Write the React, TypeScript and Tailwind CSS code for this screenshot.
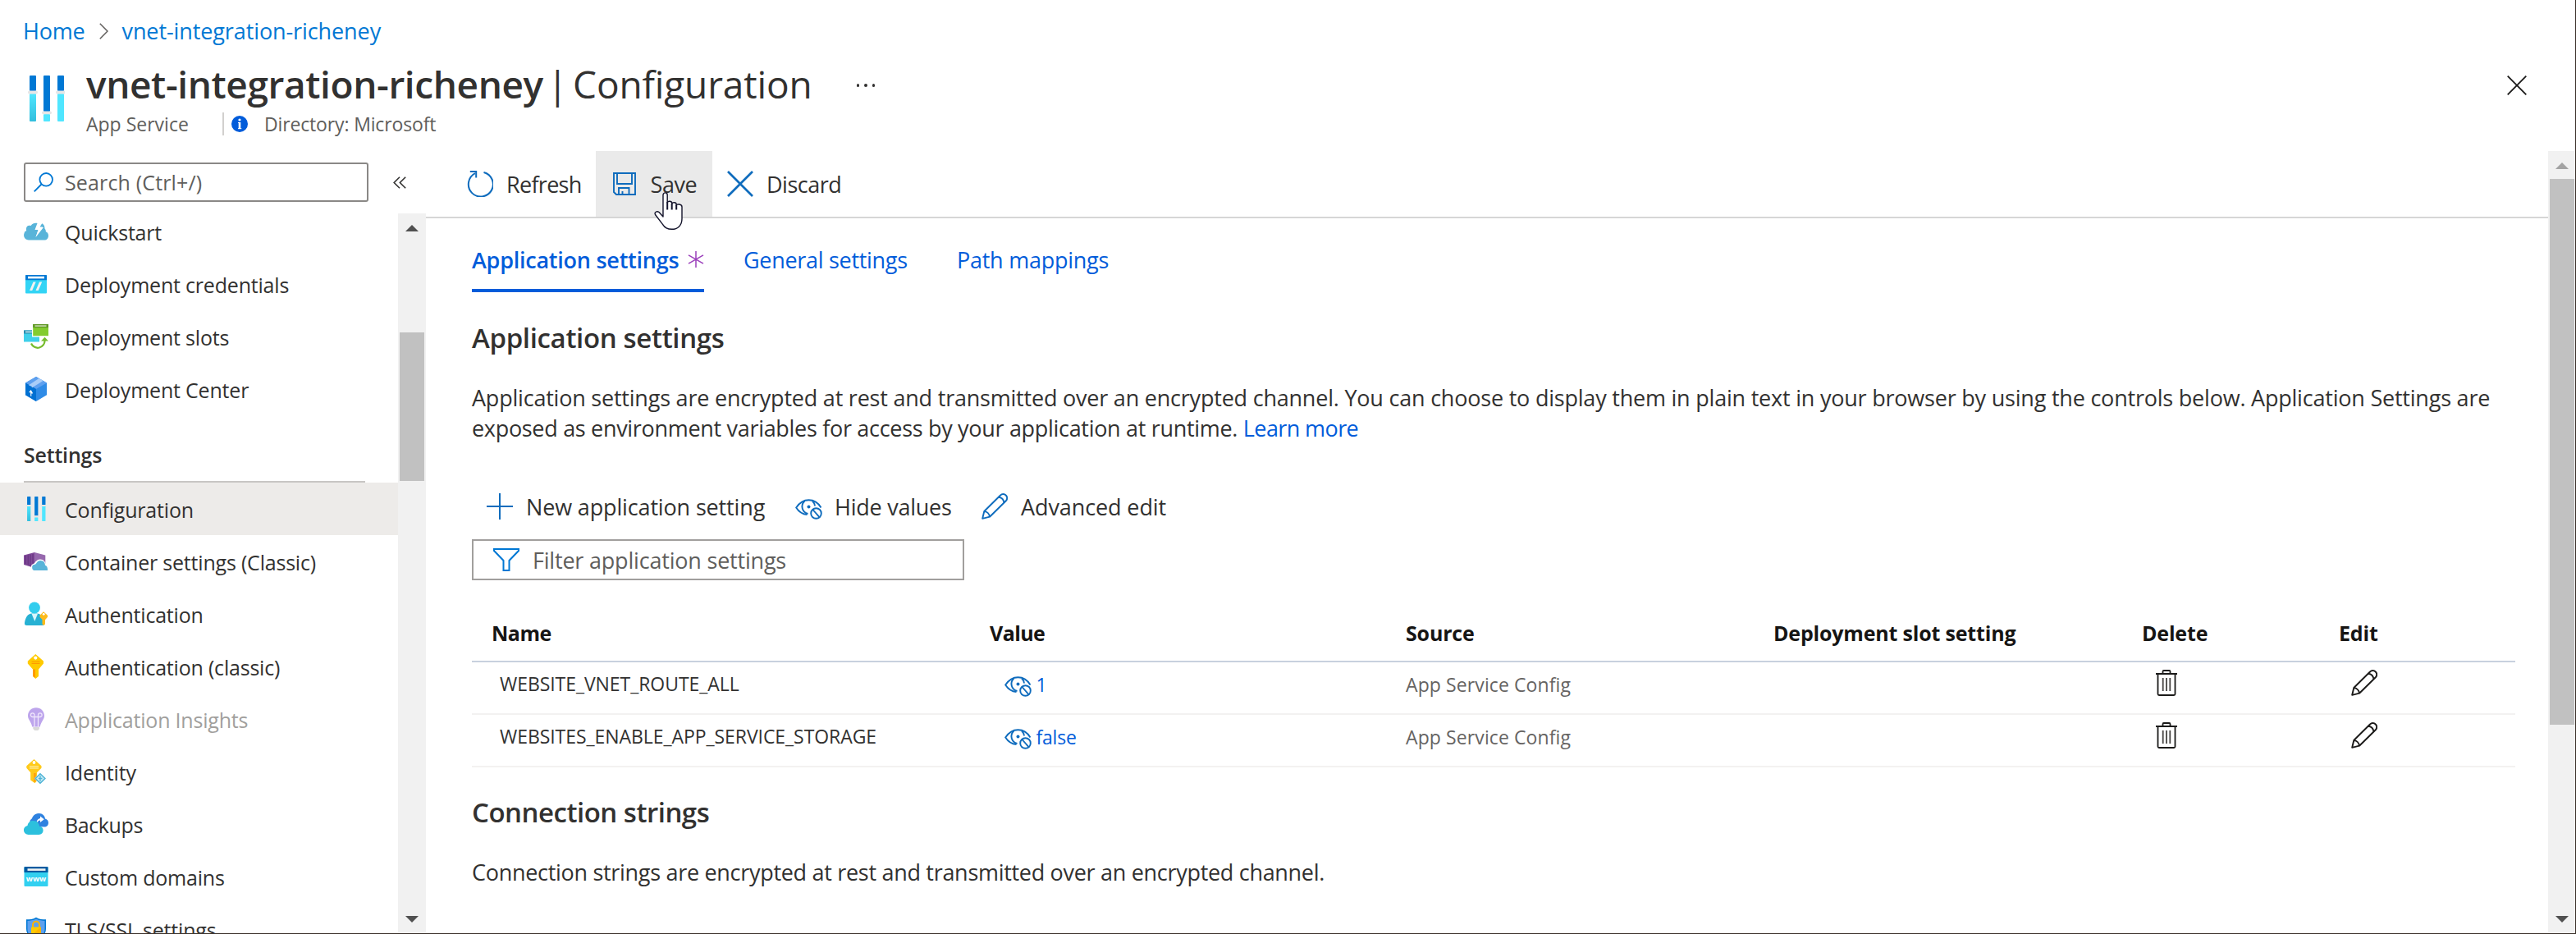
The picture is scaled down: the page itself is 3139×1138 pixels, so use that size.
import React from "react";

type IconProps = { className?: string };

function SlidersIcon({ className }: IconProps) {
  return (
    <svg className={className} viewBox="0 0 45 56" fill="none">
      <defs>
        <linearGradient id="sl" x1="0" y1="0" x2="0" y2="1">
          <stop offset="0" stopColor="#50e6ff" />
          <stop offset="1" stopColor="#32bedd" />
        </linearGradient>
      </defs>
      <rect x="2" y="0" width="8" height="19" rx="1" fill="#0078d4" />
      <rect x="2" y="22" width="8" height="34" rx="1" fill="url(#sl)" />
      <rect x="0" y="18.6" width="12" height="3.8" rx="1.9" fill="#e6e6e6" />
      <rect x="19" y="0" width="8" height="44" rx="1" fill="#0078d4" />
      <rect x="19" y="47" width="8" height="9" rx="1" fill="#50e6ff" />
      <rect x="17" y="43.4" width="12" height="3.8" rx="1.9" fill="#e6e6e6" />
      <rect x="36" y="0" width="8" height="19" rx="1" fill="#0078d4" />
      <rect x="36" y="22" width="8" height="34" rx="1" fill="#50e6ff" />
      <rect x="34" y="18.6" width="12" height="3.8" rx="1.9" fill="#e6e6e6" />
    </svg>
  );
}

const box = "w-[30px] h-[30px] shrink-0";

const QuickstartIcon = () => (
  <svg className={box} viewBox="0 0 30 30">
    <path d="M6 25.5A6 6 0 0 1 .6 17C1 15 2 14.600 3.200 14.300 2 9 5 7 8.600 8 10.500 5 14 4.200 16.500 5l-3 8h4l-3 9 8.500-12.500h-4.500L22.500 5.200c2 1.500 3 3.200 3 6.300 1 1 1.500 2.200 1.300 3.700 2 .5 3.200 2.500 3.200 5 0 3-2 5.300-5 5.300Z" fill="#59b4d9" />
    <path d="M17.500 4.500 14 12.700h4L14.500 22 24 10h-4.500l2.500-5.500Z" fill="#fff" />
  </svg>
);

const CredentialsIcon = () => (
  <svg className={box} viewBox="0 0 30 30">
    <rect x="2" y="4" width="26" height="22.500" rx="1" fill="#32d4f5" />
    <path d="M2 5a1 1 0 0 1 1-1h24a1 1 0 0 1 1 1v5.200H2Z" fill="#0078d4" />
    <rect x="5" y="5.800" width="20" height="2.600" fill="#fff" />
    <path d="M11.500 12.500h3.200L10.200 23H7Z M19 12.500h3.200L17.700 23h-3.200Z" fill="#f2f2f2" />
  </svg>
);

const SlotsIcon = () => (
  <svg className={box} viewBox="0 0 30 30">
    <rect x="0" y="7.500" width="19" height="14" fill="#3fd0ea" />
    <rect x="0" y="7.500" width="19" height="4" fill="#2a8cad" />
    <rect x="2" y="8.700" width="8" height="1.500" fill="#c8eaf3" />
    <rect x="10" y="0" width="20" height="15.500" fill="#fff" />
    <rect x="11.200" y="0" width="18.800" height="14.200" fill="#83cc2f" />
    <rect x="11.200" y="0" width="18.800" height="4.200" fill="#5e9624" />
    <rect x="13.500" y="1.300" width="14" height="1.600" fill="#c8dcae" />
    <path d="M9 23.500a8.600 8.600 0 0 0 16.500-4" fill="none" stroke="#76bc2d" strokeWidth="2.200" />
    <path d="M21 20.500l4.500-4.700 4.500 4.700Z" fill="#76bc2d" />
  </svg>
);

const CenterIcon = () => (
  <svg className={box} viewBox="0 0 30 30">
    <path d="M15 0 28 7.500v14.800L15 30 2 22.300V7.500Z" fill="#2f8be6" />
    <path d="M15 0 28 7.500 15 15 2 7.500Z" fill="#5ea0ef" />
    <path d="M2 7.500 15 15v15L2 22.300Z" fill="#0070d2" />
    <path d="M18.500 2 23.500 5 9.800 13.500V12L6 10.200Z" fill="#a9cdf8" />
    <path d="M8.200 23.500v-4.300H6.500v-.6L8.700 16l2.200 3.800v.8H9.300v3.500Z" fill="#fff" />
  </svg>
);

const ContainerIcon = () => (
  <svg className={box} viewBox="0 0 30 30">
    <path d="M0 7.500 13 4v19L0 19Z" fill="#804998" />
    <path d="M13 4 26.300 7.500V19L13 23Z" fill="#9668ad" />
    <path d="M2.500 8v10.500M5.200 7.400v12M8 6.600v13.800M11 6v15" stroke="#5f2f78" strokeWidth="0.900" />
    <path d="M12.500 26.500a4.500 4.500 0 0 1-.5-8.700c1.500.2 2-4.800 8-5.300 4.500 0 6.500 3.500 7 6.500A4 4 0 0 1 29 26.500Z" fill="#fff" />
    <path d="M14 26a3.600 3.600 0 0 1-.5-7.200c1.800.1 2.200-4.600 6.800-4.800 4 0 5.600 3 5.700 5.700 2.200.5 3.200 3 3 6.300Z" fill="#59b4d9" />
  </svg>
);

const AuthIcon = () => (
  <svg className={box} viewBox="0 0 30 30">
    <path d="M3.500 29A2.600 2.600 0 0 1 1 26c.8-6 3.500-11.500 9-11.500h6c5.500 0 8.500 5.500 9 11.500a2.600 2.600 0 0 1-2.500 3Z" fill="#27b1d3" />
    <path d="M9.500 14.800h7.500L13.300 24Z" fill="#d8f6fc" />
    <circle cx="13" cy="7.500" r="6.900" fill="#32cdee" />
    <path d="M24 12.300l5 4.500v2l-3 3.400v5.300L24.300 29l-1.800-1.500V22l-3-3.200v-2Z" fill="#fdbb1b" />
    <circle cx="24.200" cy="15.300" r="1.400" fill="#fff" />
  </svg>
);

const KeyIcon = () => (
  <svg className={box} viewBox="0 0 30 30">
    <path d="M14.300 0 24 8.500v3L18 18.600v8.400L14.300 30 11 27v-8.400L4.800 11.500v-3Z" fill="#ffca00" />
    <path d="M11.300 18.500h2.500V29L11.300 27Z" fill="#ff9300" />
    <circle cx="14.300" cy="4.600" r="2.100" fill="#fff" />
    <path d="M9.500 9.300h10M9.500 11.500h10" stroke="#ff9300" strokeWidth="0.900" />
  </svg>
);

const BulbIcon = () => (
  <svg className={box} viewBox="0 0 30 30">
    <path d="M15 1.200c5.600 0 10 4.200 10 9.800 0 5-3.800 6.500-5.200 13.500h-9.600C8.800 17.500 5 16 5 11 5 5.400 9.400 1.200 15 1.200Z" fill="#bda5ec" />
    <path d="M13 24.500V12.500h4.500v12M13 12.500H10.700a2.300 2.300 0 1 1 2.300-2.300v2.300M17.500 12.500h2.300a2.300 2.300 0 1 0-2.300-2.300v2.300" fill="none" stroke="#efe6fb" strokeWidth="1.300" />
    <path d="M11.300 25h7.700v2l-1.800 2h-4l-1.900-2Z" fill="#d9d9d9" />
  </svg>
);

const IdentityIcon = () => (
  <svg className={box} viewBox="0 0 30 30">
    <path d="M12.500 0 21.500 8.200v2.500L16 16.300v10l-2.500 3-5.300-3.800v-9.200L3.300 10.700V8.200Z" fill="#ffca1a" />
    <path d="M12.200 17h2.500v10l-2.500 1Z" fill="#ff9e0f" />
    <circle cx="12.500" cy="4" r="1.900" fill="#fff" />
    <path d="M7 8.800h11M7 11h11" stroke="#fff2b8" strokeWidth="1" />
    <path d="M20 16.200l7.300 7.300L20 30.500 12.800 23.500Z" fill="#fff" />
    <path d="M20 17.700l5.900 5.800L20 29.300l-5.900-5.800Z" fill="#c9ecf5" stroke="#4fb3d6" strokeWidth="1.500" />
    <path d="M20 20v7M17.800 23.500h4.600" stroke="#4fb3d6" strokeWidth="1.300" />
  </svg>
);

const BackupsIcon = () => (
  <svg className={box} viewBox="0 0 30 30">
    <path d="M13 18a5.500 5.500 0 0 1-5-8c1.500-1 2-2 3-4 1.500-2.500 4.500-4 7.500-4 4.500 0 7 3 7.500 6.500 2.500.5 4 2.700 4 5 0 3-2 5-5 5Z" fill="#2f82e0" />
    <path d="M15.500 14c0-3.500 1.500-5.500 4.500-6V5.500l4.800 3.700L20 13v-2.500c-2 0-3 1.200-4.500 3.500Z" fill="#fff" />
    <path d="M5.500 28a5.600 5.600 0 0 1-1-11.100c.8-4 3.500-5.900 7-5.900 4.400 0 7 2.800 7.500 6.800 2.800.2 4.600 2.300 4.600 5 0 3-2.300 5.200-5.200 5.200Z" fill="#2cc0dd" />
  </svg>
);

const DomainsIcon = () => (
  <svg className={box} viewBox="0 0 30 30">
    <rect x="0.500" y="3" width="29" height="24" rx="1" fill="#32d0f0" />
    <path d="M.5 4a1 1 0 0 1 1-1h27a1 1 0 0 1 1 1v6H.5Z" fill="#005ba1" />
    <rect x="4.500" y="5.300" width="22" height="2.600" fill="#f2f2f2" />
    <text x="15" y="20.500" textAnchor="middle" fontFamily="Open Sans, sans-serif" fontWeight="700" fontSize="9.500" fill="#fff">www</text>
  </svg>
);

const ShieldIcon = () => (
  <svg className={box} viewBox="0 0 30 30">
    <path d="M15 .7c4 2.500 7.500 2.300 12 2.600v11.500c0 8-7 12-12 14.700C10 26.800 3 22.800 3 14.800V3.300c4.500-.3 8-.1 12-2.600Z" fill="#0078d4" />
    <path d="M15 2.500c3.500 2 7 2.100 10.500 2.400v10c0 7-6 10.500-10.500 12.800C10.500 25.400 4.500 21.900 4.500 14.900v-10C8 4.600 11.500 4.500 15 2.500Z" fill="#5ea0ef" />
    <path d="M11 13V9.800a4 4 0 0 1 8 0V13" fill="none" stroke="#ffb300" strokeWidth="2" />
    <rect x="9" y="12.500" width="12" height="10" rx="1" fill="#ffca00" />
    <path d="M9 22.500l12-10V22.500Z" fill="#ffb300" />
  </svg>
);

const ConfigIcon = () => (
  <span className="flex w-[30px] h-[30px] shrink-0 justify-center">
    <SlidersIcon className="w-[24px] h-[30px]" />
  </span>
);

function EyeOffIcon({ className }: IconProps) {
  return (
    <svg className={className} viewBox="0 0 33 25" fill="none" stroke="#0f6cbd" strokeWidth="1.900">
      <path d="M31.500 10.500C28 4.500 22.500 1.200 16.500 1.200S5 4.700 1.200 10.500c3 4.700 7.300 8 13.300 8.600" />
      <path d="M11.500 2.500a9 9 0 0 0 4 15.500M21 2.500a9.500 9.500 0 0 1 3 6" />
      <circle cx="16.500" cy="9.500" r="2" fill="#0f6cbd" stroke="none" />
      <circle cx="25.500" cy="17.500" r="6.300" />
      <path d="M21.500 13l8 9.200" />
    </svg>
  );
}

function PencilIcon({ className }: IconProps) {
  return (
    <svg className={className} viewBox="0 0 32 32" fill="none" stroke="currentColor" strokeWidth="1.900" strokeLinejoin="round">
      <path d="M1.200 30.800 3.300 22 23 2.500a4.700 4.700 0 0 1 6.800 0 4.700 4.700 0 0 1 0 6.700L10 28.700Z" />
      <path d="M3.300 22c3.500.3 6.300 3 6.700 6.700M20.800 4.700c3.600.4 6.200 3 6.700 6.700" />
    </svg>
  );
}

function TrashIcon({ className }: IconProps) {
  return (
    <svg className={className} viewBox="0 0 26 32" fill="none" stroke="#1b1a19">
      <path d="M0 5h26" strokeWidth="2" />
      <path d="M8.500 4.500V2.200c0-.7.500-1.200 1.200-1.200h6.600c.7 0 1.200.5 1.200 1.200v2.300" strokeWidth="1.800" />
      <path d="M2.500 5.500v24c0 .9.600 1.500 1.500 1.500h18c.9 0 1.500-.6 1.500-1.500v-24" strokeWidth="1.800" />
      <path d="M8.700 10v16M13 10v16M17.300 10v16" strokeWidth="1.800" stroke="#484644" />
    </svg>
  );
}

function ScrollArrow({ up, color }: { up?: boolean; color: string }) {
  return (
    <svg className="h-[8px] w-[16px]" viewBox="0 0 16 8">
      <path d={up ? "M0 8 8 0l8 8Z" : "M0 0h16L8 8Z"} fill={color} />
    </svg>
  );
}

function NavItem({ icon, label, active, dim, tight }: { icon: React.ReactNode; label: string; active?: boolean; dim?: boolean; tight?: boolean }) {
  return (
    <div className={`flex h-[64px] shrink-0 items-center gap-[20px] pl-[29px] ${active ? "bg-[#edebe9]" : ""}`}>
      {icon}
      <span className={`pt-[2px] text-[25px] leading-[36px] whitespace-nowrap ${tight ? "tracking-[-0.4px]" : "tracking-[-0.2px]"} ${dim ? "text-[#a19f9d]" : "text-[#323130]"}`}>{label}</span>
    </div>
  );
}

function Sidebar() {
  return (
    <aside className="flex w-[519px] shrink-0 flex-col">
      <div className="flex h-[66px] shrink-0 pt-[14px] pl-[29px]">
        <div className="flex h-[48px] w-[420px] items-center rounded-[3px] border-2 border-[#8a8886] pl-[10px]">
          <svg className="h-[24px] w-[24px]" viewBox="0 0 24 24" fill="none" stroke="#0078d4" strokeWidth="1.800">
            <circle cx="15.200" cy="8.800" r="7.800" />
            <path d="M9.500 14.500.7 23.300" />
          </svg>
          <span className="ml-[14px] text-[25px] leading-[36px] tracking-[0.15px] text-[#605e5c]">Search (Ctrl+/)</span>
        </div>
        <svg className="mt-[17px] ml-[30px] h-[15px] w-[16px]" viewBox="0 0 16 15" fill="none" stroke="#323130" strokeWidth="1.600">
          <path d="M8 .7 1.200 7.500 8 14.300M15.200.7 8.400 7.500l6.800 6.800" />
        </svg>
      </div>
      <div className="flex min-h-0 flex-1">
        <nav className="flex w-[485px] flex-col overflow-hidden">
          <NavItem icon={<QuickstartIcon />} label="Quickstart" />
          <NavItem icon={<CredentialsIcon />} label="Deployment credentials" />
          <NavItem icon={<SlotsIcon />} label="Deployment slots" />
          <NavItem icon={<CenterIcon />} label="Deployment Center" />
          <div className="mr-[40px] ml-[29px] h-[82px] shrink-0 border-b-2 border-[#c8c6c4] pt-[30px]">
            <h3 className="text-[25px] leading-[36px] font-semibold tracking-[-0.2px] text-[#323130]">Settings</h3>
          </div>
          <NavItem icon={<ConfigIcon />} label="Configuration" active />
          <NavItem icon={<ContainerIcon />} label="Container settings (Classic)" />
          <NavItem icon={<AuthIcon />} label="Authentication" />
          <NavItem icon={<KeyIcon />} label="Authentication (classic)" />
          <NavItem icon={<BulbIcon />} label="Application Insights" dim />
          <NavItem icon={<IdentityIcon />} label="Identity" />
          <NavItem icon={<BackupsIcon />} label="Backups" tight />
          <NavItem icon={<DomainsIcon />} label="Custom domains" />
          <NavItem icon={<ShieldIcon />} label="TLS/SSL settings" />
        </nav>
        <div className="mt-[10px] flex w-[34px] flex-col items-center bg-[#f1f1f1] pt-[14px] pb-[13px]">
          <ScrollArrow up color="#505050" />
          <div className="mt-[123px] h-[181px] w-[30px] bg-[#c1c1c1]" />
          <div className="flex-1" />
          <ScrollArrow color="#505050" />
        </div>
      </div>
    </aside>
  );
}

function Toolbar() {
  return (
    <div className="flex h-[82px] shrink-0 border-b-2 border-[#d6d6d6] text-[27px] leading-[40px] text-[#323130]">
      <div className="flex w-[207px] items-center pl-[50px]">
        <svg className="h-[32px] w-[32px]" viewBox="0 0 32 32" fill="none" stroke="#0f6cbd" strokeWidth="2">
          <path d="M20.500 2A15 15 0 1 1 10 3.200" />
          <path d="M3.800 1h7.400v7.400" />
        </svg>
        <span className="ml-[16px] pt-[2px] tracking-[-0.7px]">Refresh</span>
      </div>
      <div className="flex w-[142px] items-center bg-[#eaeaea] pl-[20.500px]">
        <svg className="h-[28px] w-[28px]" viewBox="0 0 28 28" fill="none" stroke="#0f6cbd" strokeWidth="1.900">
          <path d="M1 1h26v26H4L1 24Z" />
          <path d="M5 1.500V14h18V1.500" />
          <path d="M7 27v-8h12.500v8M11.500 27v-4" />
        </svg>
        <span className="ml-[18px] pt-[2px] tracking-[-0.4px]">Save</span>
      </div>
      <div className="flex items-center pl-[18px]">
        <svg className="h-[32px] w-[32px]" viewBox="0 0 32 32" fill="none" stroke="#0f6cbd" strokeWidth="2.700">
          <path d="M1 1l30 30M31 1 1 31" />
        </svg>
        <span className="ml-[16px] pt-[2px] tracking-[-0.5px]">Discard</span>
      </div>
    </div>
  );
}

const columns = "grid grid-cols-[631px_507px_448px_449px_240px_215px]";

function SettingRow({ name, value }: { name: string; value: string }) {
  return (
    <div className={`${columns} h-[64px] border-b-2 border-[#f3f2f1] text-[23px] leading-[32px]`}>
      <div className="flex h-[52px] items-center pl-[34px] tracking-[-0.06px] text-[#323130]">{name}</div>
      <div className="flex h-[54px] items-center pl-[17.500px] text-[#015cda]">
        <EyeOffIcon className="mt-[4px] h-[25px] w-[33px]" />
        <span className="ml-[6px] tracking-[-0.2px]">{value}</span>
      </div>
      <div className="flex h-[54px] items-center tracking-[0.1px] text-[#666463]">App Service Config</div>
      <div />
      <div className="flex h-[50px] items-center pl-[17px]"><TrashIcon className="h-[32px] w-[26px]" /></div>
      <div className="flex h-[50px] items-center pl-[15px] text-[#1b1a19]"><PencilIcon className="h-[32px] w-[32px]" /></div>
    </div>
  );
}

function Content() {
  return (
    <section className="flex flex-col pl-[56px] text-[27px] leading-[37px] text-[#323130]">
      <div className="flex h-[90px] text-[#015cda]">
        <div className="flex w-[283px] items-center border-b-4 border-[#015cda] pt-[14px]">
          <span className="font-semibold tracking-[-0.25px]">Application settings</span>
          <svg className="ml-auto h-[20px] w-[20px]" viewBox="0 0 20 20" fill="none" stroke="#9b3fbb" strokeWidth="1.500">
            <path d="M10 0v20M1 4.800l18 10.400M19 4.800 1 15.200" />
          </svg>
        </div>
        <div className="ml-[48px] flex w-[260px] items-center pt-[10px] tracking-[-0.3px]">General settings</div>
        <div className="flex items-center pt-[10px] tracking-[-0.25px]">Path mappings</div>
      </div>

      <h2 className="mt-[26px] text-[33px] leading-[60px] font-semibold tracking-[-0.35px]">Application settings</h2>
      <p className="mt-[24px] whitespace-nowrap">
        <span className="block tracking-[-0.215px]">
          Application settings are encrypted at rest and transmitted over an encrypted channel. You can choose to display them in plain text in your browser by using the controls below. Application Settings are
        </span>
        <span className="block tracking-[-0.31px]">
          exposed as environment variables for access by your application at runtime.{" "}
          <a className="text-[#015cda] tracking-[-0.6px]">Learn more</a>
        </span>
      </p>

      <div className="mt-[57px] flex h-[40px] items-center pl-[18px]">
        <div className="flex w-[376px] items-center">
          <svg className="h-[32px] w-[32px]" viewBox="0 0 32 32" fill="none" stroke="#0f6cbd" strokeWidth="2">
            <path d="M16 0v32M0 16h32" />
          </svg>
          <span className="ml-[16px] tracking-[-0.15px]">New application setting</span>
        </div>
        <div className="flex w-[227px] items-center">
          <EyeOffIcon className="mt-[7px] h-[25px] w-[33px]" />
          <span className="ml-[15px] tracking-[-0.24px]">Hide values</span>
        </div>
        <div className="flex items-center">
          <PencilIcon className="h-[32px] w-[32px] text-[#0f6cbd]" />
          <span className="ml-[16px] tracking-[-0.1px]">Advanced edit</span>
        </div>
      </div>

      <div className="mt-[20px] flex h-[50px] w-[600px] items-center border-2 border-[#a19f9d] pl-[24px]">
        <svg className="h-[28px] w-[32px]" viewBox="0 0 32 28" fill="none" stroke="#0078d4" strokeWidth="2">
          <path d="M1 1h30v2L19.500 15v12h-7V15L1 3Z" />
        </svg>
        <span className="ml-[16px] tracking-[-0.2px] text-[#605e5c]">Filter application settings</span>
      </div>

      <div className="mt-[28px] w-[2490px]">
        <div className={`${columns} h-[72px] items-center border-b-2 border-[#c8d1de] pt-[2px] text-[25px] leading-[36px] font-bold tracking-[-0.18px] text-[#161514]`}>
          <div className="pl-[24px] tracking-[-0.5px]">Name</div>
          <div className="tracking-[-0.6px]">Value</div>
          <div>Source</div>
          <div>Deployment slot setting</div>
          <div>Delete</div>
          <div>Edit</div>
        </div>
        <SettingRow name="WEBSITE_VNET_ROUTE_ALL" value="1" />
        <SettingRow name="WEBSITES_ENABLE_APP_SERVICE_STORAGE" value="false" />
      </div>

      <h2 className="mt-[25px] text-[33px] leading-[60px] font-semibold tracking-[-0.5px]">Connection strings</h2>
      <p className="mt-[24px] tracking-[-0.3px]">Connection strings are encrypted at rest and transmitted over an encrypted channel.</p>
    </section>
  );
}

function Header() {
  return (
    <header className="flex h-[184px] shrink-0 flex-col">
      <div className="flex h-[72px] items-center pt-[3px] pl-[28px] text-[27px] leading-[40px] text-[#0078d4]">
        <span className="tracking-[-0.2px]">Home</span>
        <svg className="ml-[17px] h-[20px] w-[11px]" viewBox="0 0 11 20" fill="none" stroke="#605e5c" strokeWidth="1.500">
          <path d="M.8.800 10 10 .8 19.200" />
        </svg>
        <span className="ml-[17px] tracking-[-0.1px]">vnet-integration-richeney</span>
      </div>
      <div className="flex flex-1">
        <div className="w-[105px] pt-[20px] pl-[34px]">
          <SlidersIcon className="h-[56px] w-[45px]" />
        </div>
        <div>
          <div className="flex h-[60px] items-center text-[46px] leading-[60px] text-[#323130]">
            <h1 className="font-semibold tracking-[-0.4px]">vnet-integration-richeney</h1>
            <span className="ml-[5px]">|</span>
            <span className="ml-[6px] tracking-[-0.15px]">Configuration</span>
            <span className="mt-[4px] ml-[54px] flex gap-[6px]">
              <i className="h-[3.500px] w-[3.500px] rounded-full bg-[#323130]" />
              <i className="h-[3.500px] w-[3.500px] rounded-full bg-[#323130]" />
              <i className="h-[3.500px] w-[3.500px] rounded-full bg-[#323130]" />
            </span>
          </div>
          <div className="flex h-[37px] items-center text-[23px] leading-[36px] text-[#605e5c]">
            <span className="w-[166px]">App Service</span>
            <span className="h-[28px] w-[2px] bg-[#d2d0ce]" />
            <svg className="ml-[9px] h-[20px] w-[20px]" viewBox="0 0 20 20">
              <circle cx="10" cy="10" r="10" fill="#015cda" />
              <circle cx="10" cy="5" r="1.600" fill="#fff" />
              <path d="M10 8v8" stroke="#fff" strokeWidth="2.600" fill="none" />
              <path d="M8 8.500h2M8 15.700h4.300" stroke="#fff" strokeWidth="1" />
            </svg>
            <span className="ml-[20px] tracking-[-0.15px]">Directory: Microsoft</span>
          </div>
        </div>
        <svg className="mt-[20px] mr-[59px] ml-auto h-[24px] w-[24px]" viewBox="0 0 24 24" stroke="#1b1a19" strokeWidth="1.800">
          <path d="M.7.700l22.600 22.600M23.300.700.7 23.300" />
        </svg>
      </div>
    </header>
  );
}

export default function App() {
  return (
    <div className="relative flex h-[1138px] w-[3139px] flex-col overflow-hidden border-r border-b border-[#3a3029] bg-white font-['Open_Sans',sans-serif]">
      <Header />
      <div className="flex min-h-0 flex-1">
        <Sidebar />
        <main className="flex min-w-0 flex-1 flex-col">
          <Toolbar />
          <Content />
        </main>
        <div className="flex w-[33px] shrink-0 flex-col items-center bg-[#f1f1f1] pt-[14px] pb-[13px]">
          <ScrollArrow up color="#a3a3a3" />
          <div className="mt-[12px] h-[665px] w-[30px] bg-[#c1c1c1]" />
          <div className="flex-1" />
          <ScrollArrow color="#505050" />
        </div>
      </div>
      {/* mouse pointer hovering over Save */}
      <svg className="absolute top-[234px] left-[797px] h-[47px] w-[36px]" viewBox="0 0 36 47" fill="#fff" stroke="#14142b" strokeWidth="1.400" strokeLinejoin="round">
        <path d="M11 30V3.500a2.600 2.600 0 0 1 5.200 0V13c0-2.500 5.500-2.500 5.500.5v1c0-2.500 5.500-2.200 5.500.5v1.500c0-2.500 6.800-2 6.800 1.500v14.500c0 8-5 12.800-12.500 12.800-5.500 0-8.500-1.800-11-6L1.500 27.500c-1.500-2.800 2-4.800 4.500-3Z" />
        <path d="M16.200 12v9.500M21.700 14v7.500M27.200 15.500v6" strokeWidth="2" />
      </svg>
    </div>
  );
}
